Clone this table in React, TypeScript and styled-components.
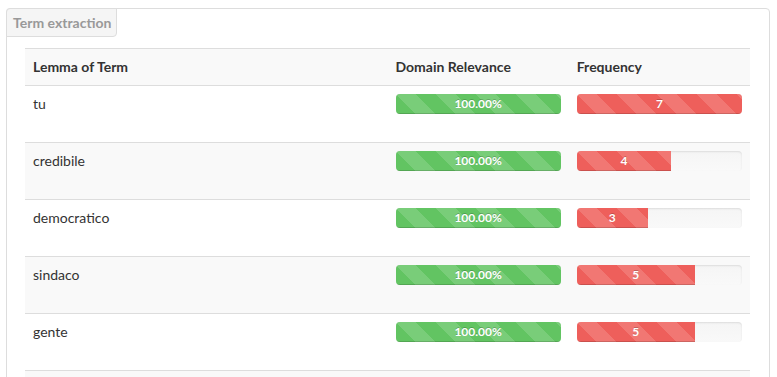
import React from "react";
import styled, { createGlobalStyle } from "styled-components";

const Global = createGlobalStyle`
  html, body { margin: 0; padding: 0; background: #fff; }
  body {
    padding: 8px 7px 0 6px;
    font-family: Lato, "Open Sans", "Liberation Sans", sans-serif;
    font-size: 14px;
    color: #333;
    overflow: hidden;
  }
`;

const Panel = styled.div`
  position: relative;
  border: 1px solid #ddd;
  border-radius: 4px 4px 0 0;
  padding: 39px 19px 0 18px;
  height: 400px;
  box-sizing: border-box;
`;

const Tab = styled.div`
  position: absolute;
  top: -1px;
  left: -1px;
  padding: 5px 5px 4px 6px;
  line-height: 18px;
  font-size: 14px;
  font-weight: 700;
  color: #999;
  background: #f5f5f5;
  border: 1px solid #ddd;
  border-radius: 4px 0 4px 0;
`;

const Table = styled.table`
  width: 100%;
  border-collapse: collapse;
  border-spacing: 0;
  table-layout: fixed;
`;

const HeadCell = styled.th<{ $w: string }>`
  box-sizing: border-box;
  width: ${(p) => p.$w};
  text-align: left;
  font-weight: 700;
  padding: 8px;
  line-height: 20px;
  background: #f9f9f9;
  border-top: 1px solid #ddd;
  border-bottom: 1px solid #ddd;
`;

const Row = styled.tr<{ $shaded: boolean }>`
  background: ${(p) => (p.$shaded ? "#f9f9f9" : "#fff")};
`;

const Cell = styled.td`
  box-sizing: border-box;
  padding: 8px;
  height: 57px;
  line-height: 20px;
  vertical-align: top;
  border-top: 1px solid #ddd;
`;

const Track = styled.div`
  height: 20px;
  margin-bottom: 20px;
  border-radius: 4px;
  overflow: hidden;
  background: linear-gradient(to bottom, #f5f5f5, #f9f9f9);
  box-shadow: inset 0 1px 2px rgba(0, 0, 0, 0.1);
`;

const Bar = styled.div<{ $tone: "green" | "red" }>`
  height: 100%;
  box-sizing: border-box;
  color: #fff;
  font-size: 12px;
  font-weight: 700;
  line-height: 20px;
  text-align: center;
  text-shadow: 0 -1px 0 rgba(0, 0, 0, 0.2);
  background-color: ${(p) => (p.$tone === "green" ? "#62c462" : "#ee5f5b")};
  background-image: linear-gradient(
    45deg,
    rgba(255, 255, 255, 0.15) 25%,
    transparent 25%,
    transparent 50%,
    rgba(255, 255, 255, 0.15) 50%,
    rgba(255, 255, 255, 0.15) 75%,
    transparent 75%,
    transparent
  );
  background-size: 40px 40px;
  box-shadow: inset 0 -1px 0 rgba(0, 0, 0, 0.15);
`;

const rows = [
  { term: "tu", rel: 100, freq: 7 },
  { term: "credibile", rel: 100, freq: 4 },
  { term: "democratico", rel: 100, freq: 3 },
  { term: "sindaco", rel: 100, freq: 5 },
  { term: "gente", rel: 100, freq: 5 },
];

const maxFreq = 7;

export default function App() {
  return (
    <>
      <Global />
      <Panel>
        <Tab>Term extraction</Tab>
        <Table>
          <thead>
            <tr>
              <HeadCell $w="50%">Lemma of Term</HeadCell>
              <HeadCell $w="25%">Domain Relevance</HeadCell>
              <HeadCell $w="25%">Frequency</HeadCell>
            </tr>
          </thead>
          <tbody>
            {rows.map((r, i) => (
              <Row key={r.term} $shaded={i % 2 === 1}>
                <Cell>{r.term}</Cell>
                <Cell>
                  <Track>
                    <Bar $tone="green" style={{ width: `${r.rel}%` }}>
                      {r.rel.toFixed(2)}%
                    </Bar>
                  </Track>
                </Cell>
                <Cell>
                  <Track>
                    <Bar
                      $tone="red"
                      style={{ width: `${(r.freq / maxFreq) * 100}%` }}
                    >
                      {r.freq}
                    </Bar>
                  </Track>
                </Cell>
              </Row>
            ))}
            <Row $shaded={true}>
              <Cell />
              <Cell />
              <Cell />
            </Row>
          </tbody>
        </Table>
      </Panel>
    </>
  );
}
